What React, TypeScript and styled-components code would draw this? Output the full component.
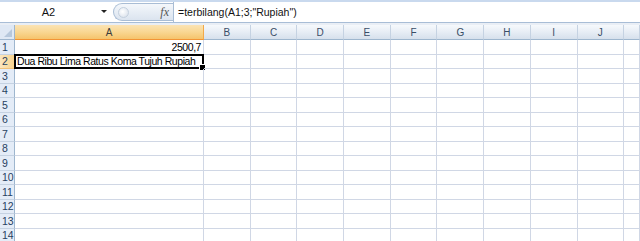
import styled, { createGlobalStyle } from 'styled-components';

const GlobalStyle = createGlobalStyle`
  html, body { margin: 0; padding: 0; background: #ffffff; overflow: hidden; }
  body { font-family: "Liberation Sans", Arial, sans-serif; }
`;

const COLS = ['A', 'B', 'C', 'D', 'E', 'F', 'G', 'H', 'I', 'J', ''];
const ROWS = Array.from({ length: 14 }, (_, i) => i + 1);

const Sheet = styled.div`
  width: 640px;
  height: 241px;
  overflow: hidden;
  background: #ffffff;
`;

const FormulaBar = styled.div`
  display: flex;
  height: 20px;
  border-top: 2px solid #c9d9ee;
  border-bottom: 1px solid #a8bdd6;
  background: #ffffff;
`;

const NameBox = styled.div`
  position: relative;
  width: 111px;
  display: flex;
  align-items: center;
  justify-content: center;
  font-size: 11px;
  color: #111;
  padding-right: 14px;
  box-sizing: border-box;
`;

const Arrow = styled.span`
  position: absolute;
  right: 4px;
  top: 8px;
  width: 0;
  height: 0;
  border-left: 3px solid transparent;
  border-right: 3px solid transparent;
  border-top: 3px solid #222;
`;

const Pill = styled.div`
  width: 60px;
  margin: 1px 0 1px 2px;
  display: flex;
  align-items: center;
  justify-content: flex-end;
  padding-right: 4px;
  box-sizing: border-box;
  border-radius: 9px 0 0 9px;
  border: 1px solid #a9bdd5;
  border-right: none;
  background: linear-gradient(#f4f7fb, #dbe4ef);
  position: relative;
`;

const Knob = styled.span`
  position: absolute;
  left: 4px;
  top: 3px;
  width: 9px;
  height: 9px;
  border-radius: 50%;
  background: radial-gradient(circle at 40% 40%, #ffffff, #d3dce8);
  border: 1px solid #c4d0de;
`;

const Fx = styled.span`
  font-family: "Liberation Serif", "Times New Roman", serif;
  font-style: italic;
  font-size: 12px;
  color: #555;
`;

const FormulaInput = styled.div`
  flex: 1;
  display: flex;
  align-items: center;
  padding-left: 4px;
  border-left: 1px solid #a9bdd5;
  font-size: 10.5px;
  color: #111;
`;

const Gap = styled.div`
  height: 2px;
  background: #e9eef5;
`;

const Grid = styled.div`
  display: grid;
  grid-template-columns: 15px 189px repeat(9, 46.7px) 1fr;
  grid-template-rows: 15px repeat(14, 14.5px);
`;

const Corner = styled.div`
  position: relative;
  background: #dfe8f4;
  border-right: 1px solid #9eb6ce;
  border-bottom: 1px solid #9eb6ce;
  box-sizing: border-box;
  &::after {
    content: '';
    position: absolute;
    right: 2px;
    bottom: 2px;
    border-left: 8px solid transparent;
    border-bottom: 8px solid #b7c8dc;
  }
`;

const ColHead = styled.div<{ $active?: boolean }>`
  display: flex;
  align-items: center;
  justify-content: center;
  font-size: 10px;
  color: ${p => (p.$active ? '#3b3b3b' : '#3a4d66')};
  box-sizing: border-box;
  border-right: 1px solid ${p => (p.$active ? '#f2a94a' : '#c5d2e2')};
  border-bottom: 1px solid ${p => (p.$active ? '#f29536' : '#9eb6ce')};
  background: ${p =>
    p.$active
      ? 'linear-gradient(#fbe3b4 0%, #f9d792 50%, #f5c46c 100%)'
      : 'linear-gradient(#f6f9fc 0%, #e7edf5 50%, #d6e0ec 100%)'};
`;

const RowHead = styled.div<{ $active?: boolean }>`
  display: flex;
  align-items: center;
  padding-left: 2px;
  font-size: 10.5px;
  color: #27415f;
  box-sizing: border-box;
  border-right: 1px solid ${p => (p.$active ? '#f29536' : '#9eb6ce')};
  border-bottom: 1px solid ${p => (p.$active ? '#f2c27a' : '#c5d2e2')};
  background: ${p => (p.$active ? 'linear-gradient(90deg, #fbe6bd, #f8d38f)' : '#e4ecf7')};
`;

const Cell = styled.div<{ $align?: 'left' | 'right' }>`
  position: relative;
  display: flex;
  align-items: center;
  justify-content: ${p => (p.$align === 'right' ? 'flex-end' : 'flex-start')};
  padding: 0 2px;
  box-sizing: border-box;
  border-right: 1px solid #d0d7e5;
  border-bottom: 1px solid #d0d7e5;
  font-size: 10.5px;
  letter-spacing: -0.45px;
  color: #000;
  white-space: nowrap;
`;

const Selection = styled.div`
  position: absolute;
  left: -1px;
  top: -1px;
  right: -1px;
  bottom: -1px;
  border: 2px solid #000;
  pointer-events: none;
  &::after {
    content: '';
    position: absolute;
    right: -4px;
    bottom: -4px;
    width: 5px;
    height: 5px;
    background: #000;
    border: 1px solid #fff;
  }
`;

const content: Record<string, { text: string; align?: 'left' | 'right' }> = {
  A1: { text: '2500,7', align: 'right' },
  A2: { text: 'Dua Ribu Lima Ratus Koma Tujuh Rupiah' },
};

export default function App() {
  return (
    <Sheet>
      <GlobalStyle />
      <FormulaBar>
        <NameBox>
          A2
          <Arrow />
        </NameBox>
        <Pill>
          <Knob />
          <Fx>fx</Fx>
        </Pill>
        <FormulaInput>=terbilang(A1;3;"Rupiah")</FormulaInput>
      </FormulaBar>
      <Gap />
      <Grid>
        <Corner />
        {COLS.map((c, i) => (
          <ColHead key={i} $active={c === 'A'}>
            {c}
          </ColHead>
        ))}
        {ROWS.map(r => [
          <RowHead key={`h${r}`} $active={r === 2}>
            {r}
          </RowHead>,
          ...COLS.map((c, i) => {
            const item = c ? content[`${c}${r}`] : undefined;
            return (
              <Cell key={`${r}-${i}`} $align={item?.align}>
                {item?.text}
                {c === 'A' && r === 2 && <Selection />}
              </Cell>
            );
          }),
        ])}
      </Grid>
    </Sheet>
  );
}
